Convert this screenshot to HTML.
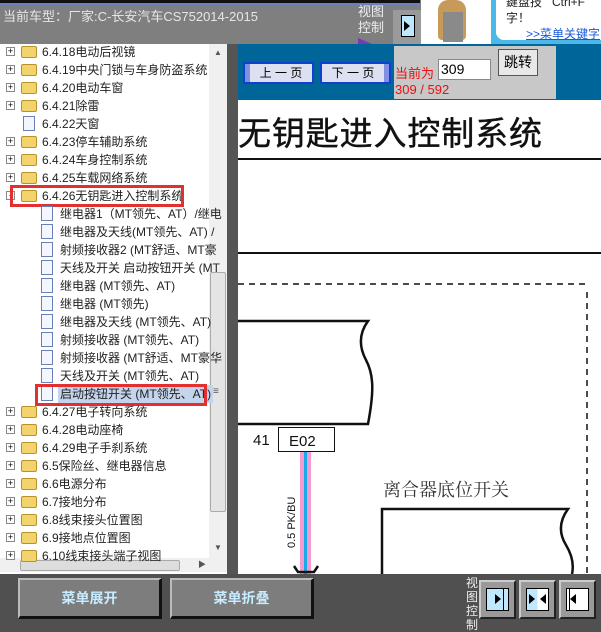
<!DOCTYPE html>
<html><head><meta charset="utf-8"><style>
*{margin:0;padding:0;box-sizing:border-box}
body{width:601px;height:626px;overflow:hidden;position:relative;background:#505050;font-family:"Liberation Sans","Noto Sans CJK SC",sans-serif}
.abs{position:absolute}
.row{position:absolute;height:18px;font-size:12px;line-height:18px;color:#222;white-space:nowrap}
.fold{position:absolute;width:16px;height:12px;background:#f3d36b;border:1px solid #b8922a;border-radius:2px;top:3px}
.doc{position:absolute;width:12px;height:15px;background:#f4f6ff;border:1px solid #6a7fb5;top:1px}
.pl{position:absolute;width:9px;height:9px;border:1px solid #888;background:#fff;font-size:9px;line-height:7px;text-align:center;color:#000;top:4px}
.btn{position:absolute;background:#7d7d7d;border-top:2px solid #bbb;border-left:2px solid #bbb;border-right:3px solid #111;border-bottom:3px solid #111;color:#c8ecff;font-weight:bold;font-size:14px;text-align:center}
.vb{position:absolute;width:37px;height:39px;background:#9a9a9a;border-top:2px solid #ccc;border-left:2px solid #ccc;border-right:2px solid #222;border-bottom:2px solid #222}
.vb div{position:absolute;left:5px;top:6px;width:23px;height:23px;border:1px solid #000;background:#fff}
</style></head><body>
<div class="abs" style="left:0;top:0;width:601px;height:46px;background:#7f7f7f"></div>
<div class="abs" style="left:0;top:0;width:420px;height:3px;background:#111"></div>
<div class="abs" style="left:0;top:3px;width:420px;height:2px;background:#6a7fc8"></div>
<div class="abs" style="left:3px;top:6px;font-size:13px;color:#e6e6e6">当前车型：厂家:C-长安汽车CS752014-2015</div>
<div class="abs" style="left:358px;top:4px;font-size:13px;line-height:16px;color:#eee;width:28px">视图控制</div>
<div class="abs" style="left:358px;top:38px;width:0;height:0;border-left:14px solid #7a3ab8;border-top:6px solid transparent"></div>
<div class="abs" style="left:393px;top:10px;width:28px;height:34px;background:#9a9a9a"></div>
<div class="abs" style="left:401px;top:15px;width:14px;height:22px;background:#bfe8ff;border:1px solid #000"></div>
<div class="abs" style="left:404px;top:21px;width:0;height:0;border-left:6px solid #000;border-top:5px solid transparent;border-bottom:5px solid transparent"></div>
<div class="abs" style="left:421px;top:0;width:70px;height:44px;background:#fff"></div>
<div class="abs" style="left:438px;top:0;width:28px;height:40px;background:#c79a5a;border-radius:10px 10px 4px 4px"></div>
<div class="abs" style="left:443px;top:12px;width:20px;height:30px;background:#8a8a8a"></div>
<div class="abs" style="left:491px;top:0;width:110px;height:44px;background:#4ab8e8"></div>
<div class="abs" style="left:496px;top:0;width:105px;height:40px;background:#fff;border-radius:0 0 0 8px"></div>
<div class="abs" style="left:506px;top:-6px;font-size:12px;line-height:16px;color:#222">鍵盘技&nbsp;&nbsp;&nbsp;Ctrl+F<br>字！</div>
<div class="abs" style="left:526px;top:25px;font-size:12px;color:#1a5ad8;text-decoration:underline">&gt;&gt;菜单关键字</div>
<div class="abs" style="left:0;top:44px;width:230px;height:530px;background:#fff"></div>
<div class="abs" style="left:209px;top:44px;width:18px;height:516px;background:#f0f0f0"></div>
<div class="abs" style="left:210px;top:272px;width:16px;height:240px;background:#e4e4e4;border:1px solid #aaa;border-radius:2px"></div>
<div class="abs" style="left:213px;top:386px;font-size:10px;color:#555">≡</div>
<div class="abs" style="left:214px;top:48px;font-size:8px;color:#555">▲</div>
<div class="abs" style="left:214px;top:543px;font-size:8px;color:#555">▼</div>
<div class="abs" style="left:0;top:558px;width:227px;height:14px;background:#f0f0f0"></div>
<div class="abs" style="left:20px;top:560px;width:160px;height:11px;background:#ddd;border:1px solid #aaa;border-radius:2px"></div>
<div class="abs" style="left:198px;top:559px;font-size:8px;color:#555">▶</div>
<div class="abs" style="left:227px;top:44px;width:11px;height:530px;background:#555"></div>

<div class="row" style="left:0;top:43px"><div class="pl" style="left:6px">+</div><div class="fold" style="left:21px"></div><span style="position:absolute;left:42px">6.4.18电动后视镜</span></div>
<div class="row" style="left:0;top:61px"><div class="pl" style="left:6px">+</div><div class="fold" style="left:21px"></div><span style="position:absolute;left:42px">6.4.19中央门锁与车身防盗系统</span></div>
<div class="row" style="left:0;top:79px"><div class="pl" style="left:6px">+</div><div class="fold" style="left:21px"></div><span style="position:absolute;left:42px">6.4.20电动车窗</span></div>
<div class="row" style="left:0;top:97px"><div class="pl" style="left:6px">+</div><div class="fold" style="left:21px"></div><span style="position:absolute;left:42px">6.4.21除雷</span></div>
<div class="row" style="left:0;top:115px"><div class="doc" style="left:23px"></div><span style="position:absolute;left:42px">6.4.22天窗</span></div>
<div class="row" style="left:0;top:133px"><div class="pl" style="left:6px">+</div><div class="fold" style="left:21px"></div><span style="position:absolute;left:42px">6.4.23停车辅助系统</span></div>
<div class="row" style="left:0;top:151px"><div class="pl" style="left:6px">+</div><div class="fold" style="left:21px"></div><span style="position:absolute;left:42px">6.4.24车身控制系统</span></div>
<div class="row" style="left:0;top:169px"><div class="pl" style="left:6px">+</div><div class="fold" style="left:21px"></div><span style="position:absolute;left:42px">6.4.25车载网络系统</span></div>
<div class="row" style="left:0;top:187px"><div class="pl" style="left:6px">-</div><div class="fold" style="left:21px"></div><span style="position:absolute;left:42px">6.4.26无钥匙进入控制系统</span></div>
<div class="abs" style="left:10px;top:185px;width:174px;height:22px;border:3px solid #e23030"></div>
<div class="row" style="left:0;top:205px"><div class="doc" style="left:41px"></div><span style="position:absolute;left:60px">继电器1（MT领先、AT）/继电</span></div>
<div class="row" style="left:0;top:223px"><div class="doc" style="left:41px"></div><span style="position:absolute;left:60px">继电器及天线(MT领先、AT) /</span></div>
<div class="row" style="left:0;top:241px"><div class="doc" style="left:41px"></div><span style="position:absolute;left:60px">射频接收器2 (MT舒适、MT豪</span></div>
<div class="row" style="left:0;top:259px"><div class="doc" style="left:41px"></div><span style="position:absolute;left:60px">天线及开关 启动按钮开关 (MT</span></div>
<div class="row" style="left:0;top:277px"><div class="doc" style="left:41px"></div><span style="position:absolute;left:60px">继电器 (MT领先、AT)</span></div>
<div class="row" style="left:0;top:295px"><div class="doc" style="left:41px"></div><span style="position:absolute;left:60px">继电器 (MT领先)</span></div>
<div class="row" style="left:0;top:313px"><div class="doc" style="left:41px"></div><span style="position:absolute;left:60px">继电器及天线 (MT领先、AT)</span></div>
<div class="row" style="left:0;top:331px"><div class="doc" style="left:41px"></div><span style="position:absolute;left:60px">射频接收器 (MT领先、AT)</span></div>
<div class="row" style="left:0;top:349px"><div class="doc" style="left:41px"></div><span style="position:absolute;left:60px">射频接收器 (MT舒适、MT豪华</span></div>
<div class="row" style="left:0;top:367px"><div class="doc" style="left:41px"></div><span style="position:absolute;left:60px">天线及开关 (MT领先、AT)</span></div>
<div class="row" style="left:0;top:385px"><div class="doc" style="left:41px"></div><span style="position:absolute;left:58px;background:#c4d4ec;padding:0 2px">启动按钮开关 (MT领先、AT)</span></div>
<div class="abs" style="left:35px;top:384px;width:172px;height:22px;border:3px solid #e23030"></div>
<div class="row" style="left:0;top:403px"><div class="pl" style="left:6px">+</div><div class="fold" style="left:21px"></div><span style="position:absolute;left:42px">6.4.27电子转向系统</span></div>
<div class="row" style="left:0;top:421px"><div class="pl" style="left:6px">+</div><div class="fold" style="left:21px"></div><span style="position:absolute;left:42px">6.4.28电动座椅</span></div>
<div class="row" style="left:0;top:439px"><div class="pl" style="left:6px">+</div><div class="fold" style="left:21px"></div><span style="position:absolute;left:42px">6.4.29电子手刹系统</span></div>
<div class="row" style="left:0;top:457px"><div class="pl" style="left:6px">+</div><div class="fold" style="left:21px"></div><span style="position:absolute;left:42px">6.5保险丝、继电器信息</span></div>
<div class="row" style="left:0;top:475px"><div class="pl" style="left:6px">+</div><div class="fold" style="left:21px"></div><span style="position:absolute;left:42px">6.6电源分布</span></div>
<div class="row" style="left:0;top:493px"><div class="pl" style="left:6px">+</div><div class="fold" style="left:21px"></div><span style="position:absolute;left:42px">6.7接地分布</span></div>
<div class="row" style="left:0;top:511px"><div class="pl" style="left:6px">+</div><div class="fold" style="left:21px"></div><span style="position:absolute;left:42px">6.8线束接头位置图</span></div>
<div class="row" style="left:0;top:529px"><div class="pl" style="left:6px">+</div><div class="fold" style="left:21px"></div><span style="position:absolute;left:42px">6.9接地点位置图</span></div>
<div class="row" style="left:0;top:547px"><div class="pl" style="left:6px">+</div><div class="fold" style="left:21px"></div><span style="position:absolute;left:42px">6.10线束接头端子视图</span></div>

<div class="abs" style="left:238px;top:44px;width:363px;height:56px;background:#006699"></div>
<div class="abs" style="left:394px;top:46px;width:162px;height:53px;background:#c8c8c8"></div>
<div class="abs" style="left:243px;top:62px;width:71px;height:22px;background:#1040d0;padding:2px"><div style="width:100%;height:100%;background:#dde0f0;font-size:12px;text-align:center;line-height:18px;border-left:5px solid #8090e0">上 一 页</div></div>
<div class="abs" style="left:320px;top:62px;width:71px;height:22px;background:#1040d0;padding:2px"><div style="width:100%;height:100%;background:#dde0f0;font-size:12px;text-align:center;line-height:18px;border-right:5px solid #8090e0">下 一 页</div></div>
<div class="abs" style="left:395px;top:63px;font-size:13px;color:#e81010">当前为</div>
<div class="abs" style="left:438px;top:59px;width:53px;height:21px;background:#fff;border:1px solid #888;font-size:14px;line-height:19px;padding-left:2px">309</div>
<div class="abs" style="left:498px;top:49px;width:40px;height:27px;background:#e8e8e8;border:1px solid #555;font-size:14px;text-align:center;line-height:25px">跳转</div>
<div class="abs" style="left:395px;top:82px;font-size:13px;color:#e81010">309 / 592</div>
<div class="abs" style="left:238px;top:100px;width:363px;height:474px;background:#fff;overflow:hidden">
<svg width="363" height="474" style="position:absolute;left:0;top:0">
<text x="0" y="45" font-size="33" font-family="Noto Sans CJK SC,sans-serif" fill="#111" stroke="#111" stroke-width="0.4" textLength="304">无钥匙进入控制系统</text>
<rect x="0" y="58" width="363" height="2" fill="#111"/>
<rect x="0" y="152" width="363" height="2" fill="#111"/>
<path d="M0 184 H349 M349 192 V474" stroke="#111" stroke-width="1.5" stroke-dasharray="6 5" fill="none"/>
<path d="M0 221 H130 C122 232 120 245 128 260 C136 275 136 292 130 324 H0" stroke="#111" stroke-width="2.5" fill="none"/>
<text x="15" y="345" font-size="15" fill="#111">41</text>
<rect x="40.5" y="327.5" width="56" height="24" fill="#fff" stroke="#111"/>
<text x="51" y="346" font-size="15" fill="#111">E02</text>
<rect x="62" y="352" width="11" height="122" fill="#f59bcf"/>
<rect x="66" y="352" width="3" height="122" fill="#1aa8e8"/>
<text transform="translate(57,448) rotate(-90)" font-size="11" fill="#111">0.5 PK/BU</text>
<text x="145" y="396" font-size="18" font-family="Noto Serif CJK SC,serif" fill="#333">离合器底位开关</text>
<path d="M144 474 V409 H330 C322 420 320 432 328 445 C334 455 336 465 334 474" stroke="#111" stroke-width="2.5" fill="none"/>
<path d="M56 466 L60 472 H76 L80 466" stroke="#111" stroke-width="2.5" fill="none"/>
</svg></div>
<div class="abs" style="left:0;top:574px;width:601px;height:52px;background:#505050"></div>
<div class="btn" style="left:18px;top:578px;width:144px;height:41px;line-height:36px">菜单展开</div>
<div class="btn" style="left:170px;top:578px;width:144px;height:41px;line-height:36px">菜单折叠</div>
<div class="abs" style="left:466px;top:576px;font-size:12px;line-height:14px;color:#eee;width:14px">视图控制</div>
<div class="vb" style="left:479px;top:580px"><div style="background:#bfe8ff;width:23px"></div><span style="position:absolute;left:14px;top:12px;border-left:6px solid #000;border-top:5px solid transparent;border-bottom:5px solid transparent"></span><span style="position:absolute;left:22px;top:6px;width:1px;height:23px;background:#000"></span></div>
<div class="vb" style="left:519px;top:580px"><div style="background:linear-gradient(90deg,#bfe8ff 50%,#fff 50%)"></div><span style="position:absolute;left:8px;top:12px;border-left:6px solid #000;border-top:5px solid transparent;border-bottom:5px solid transparent"></span><span style="position:absolute;left:19px;top:12px;border-right:6px solid #000;border-top:5px solid transparent;border-bottom:5px solid transparent"></span></div>
<div class="vb" style="left:559px;top:580px"><div></div><span style="position:absolute;left:9px;top:12px;border-right:6px solid #000;border-top:5px solid transparent;border-bottom:5px solid transparent"></span><span style="position:absolute;left:8px;top:6px;width:1px;height:23px;background:#000"></span></div>
</body></html>
